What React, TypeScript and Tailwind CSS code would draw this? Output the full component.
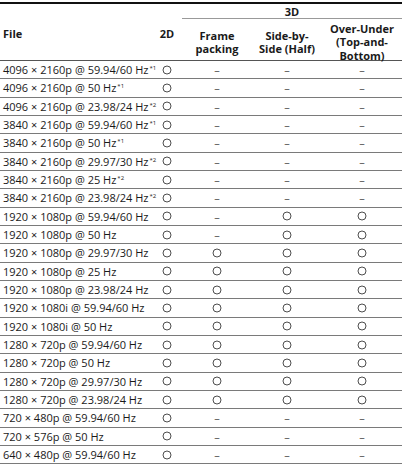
import React from "react";

type Mark = "o" | "-";
type Row = { res: string; hz: string; note?: string; m: Mark[] };

const rows: Row[] = [
  { res: "4096 × 2160p", hz: "59.94/60 Hz", note: "*1", m: ["o", "-", "-", "-"] },
  { res: "4096 × 2160p", hz: "50 Hz", note: "*1", m: ["o", "-", "-", "-"] },
  { res: "4096 × 2160p", hz: "23.98/24 Hz", note: "*2", m: ["o", "-", "-", "-"] },
  { res: "3840 × 2160p", hz: "59.94/60 Hz", note: "*1", m: ["o", "-", "-", "-"] },
  { res: "3840 × 2160p", hz: "50 Hz", note: "*1", m: ["o", "-", "-", "-"] },
  { res: "3840 × 2160p", hz: "29.97/30 Hz", note: "*2", m: ["o", "-", "-", "-"] },
  { res: "3840 × 2160p", hz: "25 Hz", note: "*2", m: ["o", "-", "-", "-"] },
  { res: "3840 × 2160p", hz: "23.98/24 Hz", note: "*2", m: ["o", "-", "-", "-"] },
  { res: "1920 × 1080p", hz: "59.94/60 Hz", m: ["o", "-", "o", "o"] },
  { res: "1920 × 1080p", hz: "50 Hz", m: ["o", "-", "o", "o"] },
  { res: "1920 × 1080p", hz: "29.97/30 Hz", m: ["o", "o", "o", "o"] },
  { res: "1920 × 1080p", hz: "25 Hz", m: ["o", "o", "o", "o"] },
  { res: "1920 × 1080p", hz: "23.98/24 Hz", m: ["o", "o", "o", "o"] },
  { res: "1920 × 1080i", hz: "59.94/60 Hz", m: ["o", "o", "o", "o"] },
  { res: "1920 × 1080i", hz: "50 Hz", m: ["o", "o", "o", "o"] },
  { res: "1280 × 720p", hz: "59.94/60 Hz", m: ["o", "o", "o", "o"] },
  { res: "1280 × 720p", hz: "50 Hz", m: ["o", "o", "o", "o"] },
  { res: "1280 × 720p", hz: "29.97/30 Hz", m: ["o", "o", "o", "o"] },
  { res: "1280 × 720p", hz: "23.98/24 Hz", m: ["o", "o", "o", "o"] },
  { res: "720 × 480p", hz: "59.94/60 Hz", m: ["o", "-", "-", "-"] },
  { res: "720 × 576p", hz: "50 Hz", m: ["o", "-", "-", "-"] },
  { res: "640 × 480p", hz: "59.94/60 Hz", m: ["o", "-", "-", "-"] },
];

const widths = ["w-[30px]", "w-[70px]", "w-[70px]", "w-[80px]"];

function Cell({ mark }: { mark: Mark }) {
  if (mark === "o") {
    return (
      <svg width="10" height="10" viewBox="0 0 10 10">
        <circle cx="5" cy="5" r="4" fill="none" stroke="#3a3a3a" strokeWidth="0.9" />
      </svg>
    );
  }
  return <span className="text-[#555]">–</span>;
}

export default function App() {
  return (
    <div
      className="w-[402px] h-[471px] bg-white text-[#1a1a1a] pt-[2px]"
      style={{ fontFamily: '"Open Sans", "Noto Sans", sans-serif' }}
    >
      <div className="border-t-2 border-[#111]">
        {/* header */}
        <div className="flex border-b border-[#555] h-[57px] text-[11px] font-bold leading-[13.2px]">
          <div className="w-[152px] flex items-center pl-[3px] pt-[3px]">File</div>
          <div className="w-[30px] flex items-center justify-center pt-[3px]">2D</div>
          <div className="w-[220px] flex flex-col">
            <div className="h-[16px] flex items-center justify-center border-b border-[#999] pt-[1px]">3D</div>
            <div className="flex flex-1 pt-[3px]">
              <div className="w-[70px] flex items-center justify-center text-center">
                Frame
                <br />
                packing
              </div>
              <div className="w-[70px] flex items-center justify-center text-center">
                Side-by-
                <br />
                Side (Half)
              </div>
              <div className="w-[80px] flex items-center justify-center text-center">
                Over-Under
                <br />
                (Top-and-
                <br />
                Bottom)
              </div>
            </div>
          </div>
        </div>
        {/* rows */}
        {rows.map((r, i) => (
          <div key={i} className="flex items-center h-[18.33px] border-b border-[#7a7a7a] text-[11px]">
            <div className="w-[152px] pl-[3px] whitespace-nowrap leading-none">
              {r.res} @ {r.hz}
              {r.note && (
                <span className="text-[6px] align-[4px] ml-[1px]">{r.note}</span>
              )}
            </div>
            {r.m.map((m, j) => (
              <div key={j} className={`${widths[j]} flex items-center justify-center leading-none`}>
                <Cell mark={m} />
              </div>
            ))}
          </div>
        ))}
      </div>
    </div>
  );
}
